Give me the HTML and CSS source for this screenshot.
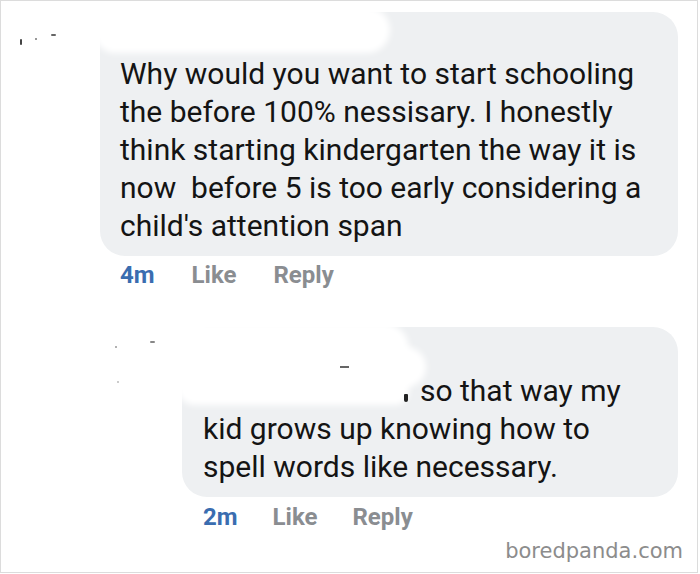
FILE: index.html
```html
<!DOCTYPE html>
<html lang="en">
<head>
<meta charset="utf-8">
<title>Comments</title>
<link rel="stylesheet" href="styles.css">
</head>
<body>
<div class="frame">
  <div class="comment">
    <div class="avatar">
      <i class="speck tick"></i>
      <i class="speck dot"></i>
      <i class="speck dash"></i>
    </div>
    <div class="body">
      <div class="bubble bubble-main">
        <div class="author"></div>
        <p class="text">Why would you want to start schooling<br>the before 100% nessisary. I honestly<br>think starting kindergarten the way it is<br>now&nbsp; before 5 is too early considering a<br>child's attention span</p>
        <span class="smudge smudge-main"></span>
      </div>
      <div class="actions">
        <span class="time">4m</span>
        <span class="act">Like</span>
        <span class="act">Reply</span>
      </div>
    </div>
  </div>

  <div class="comment reply">
    <div class="avatar">
      <i class="speck dot r1"></i>
      <i class="speck dash r2"></i>
      <i class="speck dot r3"></i>
    </div>
    <div class="body">
      <div class="bubble bubble-reply">
        <div class="author"></div>
        <p class="text text-reply"><span class="name-end"></span>so that way my<br>kid grows up knowing how to<br>spell words like necessary.</p>
        <span class="smudge smudge-reply"></span>
        <span class="smudge smudge-reply2"></span>
        <i class="streak"></i>
      </div>
      <div class="actions actions-reply">
        <span class="time">2m</span>
        <span class="act">Like</span>
        <span class="act">Reply</span>
      </div>
    </div>
  </div>

  <div class="watermark">boredpanda.com</div>
</div>
</body>
</html>
```

FILE: styles.css
```css
html, body {
  margin: 0;
  padding: 0;
  background: #ffffff;
}

.frame {
  width: 696px;
  height: 560px;
  border: 1px solid #dcdcdc;
  padding-top: 11px;
  box-sizing: content-box;
  display: flex;
  flex-direction: column;
  font-family: Roboto, "Noto Sans", sans-serif;
}

.comment {
  display: flex;
  align-items: flex-start;
}

.reply {
  padding-left: 82px;
  margin-top: 37px;
}

.avatar {
  position: relative;
  width: 99px;
  height: 60px;
  flex: none;
}

.speck {
  position: absolute;
  display: block;
  background: #555;
  border-radius: 1px;
}
.speck.tick { left: 19px; top: 27px; width: 2px; height: 6px; background: #444; }
.speck.dot  { left: 34px; top: 26px; width: 2px; height: 2px; background: #777; }
.speck.dash { left: 50px; top: 22px; width: 5px; height: 2px; background: #666; }
.speck.r1 { left: 32px; top: 19px; width: 2px; height: 2px; background: #999; }
.speck.r2 { left: 67px; top: 14px; width: 5px; height: 2px; background: #888; }
.speck.r3 { left: 34px; top: 54px; width: 2px; height: 2px; background: #bbb; }

.body {
  display: flex;
  flex-direction: column;
  align-items: flex-start;
}

.bubble {
  position: relative;
  background: #eef0f2;
  border-radius: 25px;
  padding: 10px 20px 11px 20px;
}

.bubble-main {
  width: 538px;
}

.bubble-reply {
  width: 455px;
  padding-left: 21px;
}

.author {
  height: 33px;
}

.bubble-reply .author {
  height: 35px;
}

.text {
  margin: 0;
  font-size: 30px;
  line-height: 38px;
  color: #141414;
  white-space: nowrap;
  position: relative;
  z-index: 2;
}

.name-end {
  display: inline-block;
  width: 4px;
  height: 8px;
  background: #222;
  border-radius: 1px 1px 2px 2px;
  margin-left: 201px;
  margin-right: 12px;
  vertical-align: -1px;
}

.smudge {
  position: absolute;
  display: block;
  background: #ffffff;
  filter: blur(3px);
  z-index: 1;
}

.smudge-main {
  left: -6px;
  top: -5px;
  width: 296px;
  height: 46px;
  border-radius: 8px 24px 24px 22px;
}

.smudge-reply {
  left: -5px;
  top: -4px;
  width: 232px;
  height: 82px;
  border-radius: 10px 26px 14px 18px;
}

.smudge-reply2 {
  left: 100px;
  top: 20px;
  width: 144px;
  height: 40px;
  border-radius: 22px;
}

.streak {
  position: absolute;
  display: block;
  left: 158px;
  top: 39px;
  width: 9px;
  height: 2px;
  background: #666;
  z-index: 3;
}

.actions {
  display: flex;
  gap: 37px;
  padding-left: 20px;
  margin-top: 4px;
  font-size: 24px;
  line-height: 30px;
  font-weight: 700;
}

.actions-reply {
  padding-left: 21px;
  margin-top: 5px;
  gap: 35px;
}

.time {
  color: #3a6db0;
}

.act {
  color: #8a8d91;
}

.watermark {
  align-self: flex-end;
  margin-right: 14px;
  margin-top: 7px;
  font-family: "DejaVu Sans", sans-serif;
  font-size: 21px;
  line-height: 24px;
  color: #8c8c8c;
}
```
